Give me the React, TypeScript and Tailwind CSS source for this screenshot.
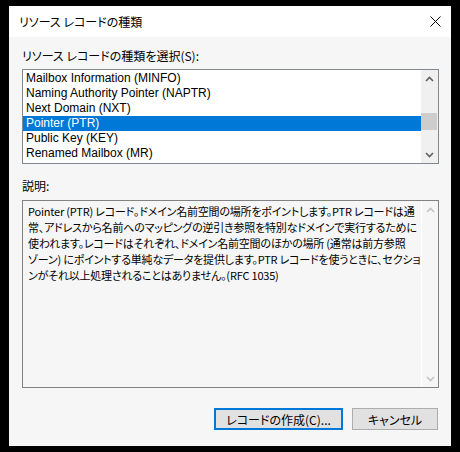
import React from 'react';

const RECORD_TYPES = [
  'Mailbox Information (MINFO)',
  'Naming Authority Pointer (NAPTR)',
  'Next Domain (NXT)',
  'Pointer (PTR)',
  'Public Key (KEY)',
  'Renamed Mailbox (MR)',
];

const DESCRIPTION = [
  'Pointer (PTR) レコード。ドメイン名前空間の場所をポイントします。PTR レコードは通',
  '常、アドレスから名前へのマッピングの逆引き参照を特別なドメインで実行するために',
  '使われます。レコードはそれぞれ、ドメイン名前空間のほかの場所 (通常は前方参照',
  'ゾーン) にポイントする単純なデータを提供します。PTR レコードを使うときに、セクショ',
  'ンがそれ以上処理されることはありません。(RFC 1035)',
];

const jp = "font-['Noto_Sans_CJK_JP',sans-serif] [font-feature-settings:'palt']";

const Chevron = ({ up, color }: { up?: boolean; color: string }) => (
  <svg width="9" height="6" viewBox="0 0 9 6">
    <path
      d={up ? 'M1 5 L4.5 1.5 L8 5' : 'M1 1 L4.5 4.5 L8 1'}
      stroke={color}
      strokeWidth="1.6"
      fill="none"
    />
  </svg>
);

const App = () => {
  const selected = 3;

  return (
    <div className="w-[460px] h-[452px] bg-black pt-[6px] pl-[9px]">
      <div className={`w-[442px] h-[440px] bg-[#f6f6f6] flex flex-col text-black ${jp}`}>
        {/* Title bar */}
        <div className="h-[31px] bg-white flex items-center justify-between pl-[10px] pr-[10px]">
          <span className="text-[12px] leading-[15px]">リソース レコードの種類</span>
          <svg width="11" height="11" viewBox="0 0 11 11">
            <path d="M0.5 0.5 L10.5 10.5 M10.5 0.5 L0.5 10.5" stroke="#000" strokeWidth="1" />
          </svg>
        </div>

        <div className="flex flex-col pl-[13px] pr-[12px] pt-[11px]">
          <div className="text-[12px] leading-[15px] h-[15px]">リソース レコードの種類を選択(S):</div>

          {/* Record type list */}
          <div className="mt-[6px] w-[417px] h-[95px] border border-[#828790] bg-white flex">
            <div className="flex-1 pt-[1px] overflow-hidden font-['Liberation_Sans',sans-serif] text-[12px]">
              {RECORD_TYPES.map((t, i) => (
                <div
                  key={t}
                  className={`h-[15px] leading-[15px] pl-[3px] whitespace-nowrap ${
                    i === selected ? 'bg-[#0078d7] text-white' : 'text-black'
                  }`}
                >
                  {t}
                </div>
              ))}
            </div>
            <div className="w-[17px] bg-[#f0f0f0] flex flex-col">
              <div className="h-[17px] flex items-center justify-center">
                <Chevron up color="#606060" />
              </div>
              <div className="flex-1">
                <div className="mt-[26px] h-[17px] w-[16px] bg-[#cdcdcd]" />
              </div>
              <div className="h-[17px] flex items-center justify-center">
                <Chevron color="#606060" />
              </div>
            </div>
          </div>

          <div className="mt-[14px] text-[12px] leading-[15px] h-[15px]">説明:</div>

          {/* Description */}
          <div className="mt-[7px] w-[417px] h-[188px] border border-[#828282] flex">
            <div className="flex-1 pl-[5px] pt-[2px] text-[11px] tracking-[-0.2px] leading-[16px] overflow-hidden">
              {DESCRIPTION.map((line) => (
                <div key={line} className="whitespace-nowrap">
                  {line}
                </div>
              ))}
            </div>
            <div className="w-[17px] border-l border-white flex flex-col justify-between">
              <div className="h-[17px] flex items-center justify-center">
                <Chevron up color="#c4c4c4" />
              </div>
              <div className="h-[17px] flex items-center justify-center">
                <Chevron color="#c4c4c4" />
              </div>
            </div>
          </div>

          {/* Buttons */}
          <div className="mt-[20px] flex justify-end gap-[9px] pr-[1px]">
            <button className="w-[129px] h-[22px] border-2 border-[#0078d7] bg-[#e1e1e1] text-[12px] leading-[15px]">
              レコードの作成(C)...
            </button>
            <button className="w-[86px] h-[22px] border border-[#adadad] bg-[#e1e1e1] text-[12px] leading-[15px]">
              キャンセル
            </button>
          </div>
        </div>
      </div>
    </div>
  );
};

export default App;
